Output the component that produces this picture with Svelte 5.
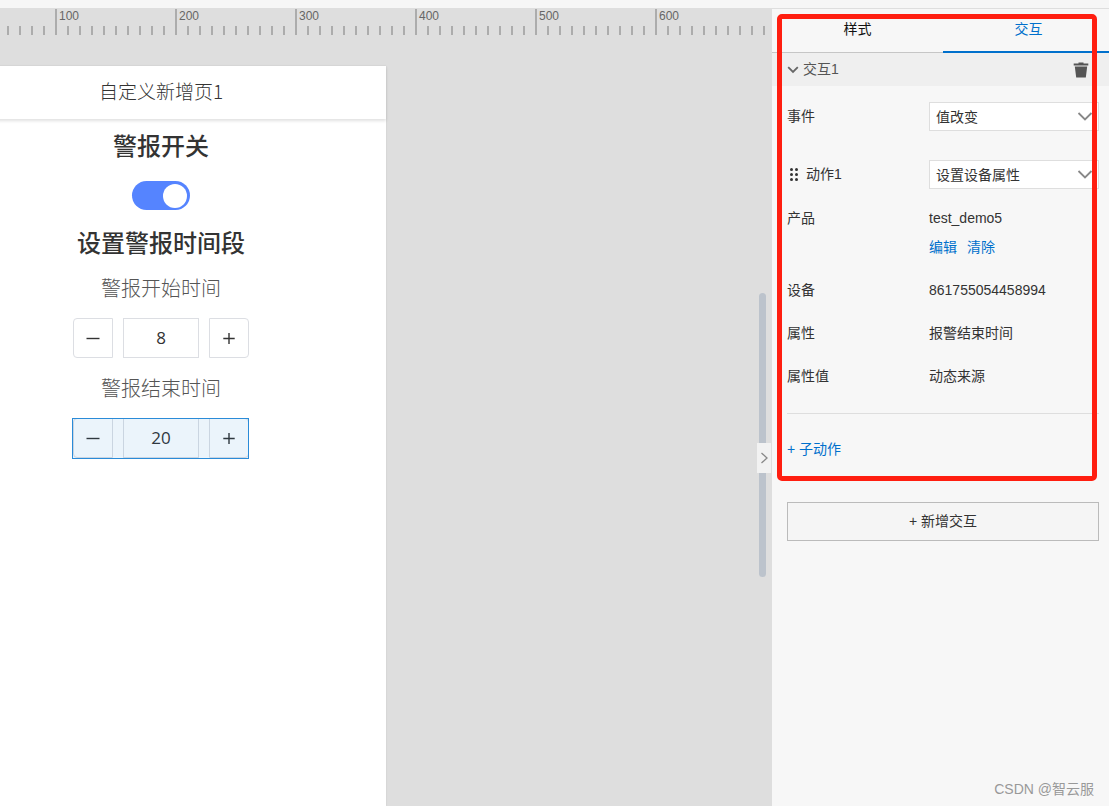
<script>
	const marks = [100, 200, 300, 400, 500, 600];

	let alarmOn = $state(true);
	let start = $state(8);
	let end = $state(20);
	let eventType = $state('值改变');
	let action = $state('设置设备属性');

	const details = [
		{ label: '设备', value: '861755054458994' },
		{ label: '属性', value: '报警结束时间' },
		{ label: '属性值', value: '动态来源' }
	];
</script>

{#snippet sign(plus)}
	<svg width="14" height="14" viewBox="0 0 14 14" stroke="#333" stroke-width="1.4" aria-hidden="true">
		<path d={plus ? 'M1.3 7.5H12.7M7 2V13' : 'M0.5 7.5H13.5'} />
	</svg>
{/snippet}

{#snippet arrow()}
	<svg class="arrow" width="16" height="10" viewBox="0 0 16 10" fill="none" stroke="#888" stroke-width="1.8" aria-hidden="true">
		<path d="M1.5 1L8 7.5L14.5 1" />
	</svg>
{/snippet}

<div class="editor">
	<div class="topbar"></div>
	<div class="workspace">
		<main class="canvas">
			<div class="ruler">
				{#each marks as mark}
					<span>{mark}</span>
				{/each}
			</div>

			<section class="page">
				<header>自定义新增页1</header>
				<div class="widgets">
					<h2><label for="alarm">警报开关</label></h2>
					<input id="alarm" class="switch" type="checkbox" bind:checked={alarmOn} />
					<h2>设置警报时间段</h2>

					<label class="caption" for="start">警报开始时间</label>
					<div class="stepper">
						<button aria-label="减少" onclick={() => start--}>{@render sign(false)}</button>
						<input id="start" type="text" bind:value={start} />
						<button aria-label="增加" onclick={() => start++}>{@render sign(true)}</button>
					</div>

					<label class="caption" for="end">警报结束时间</label>
					<div class="stepper selected">
						<button aria-label="减少" onclick={() => end--}>{@render sign(false)}</button>
						<input id="end" type="text" bind:value={end} />
						<button aria-label="增加" onclick={() => end++}>{@render sign(true)}</button>
					</div>
				</div>
			</section>

			<div class="scrollbar"></div>
			<button class="collapse" aria-label="收起">
				<svg width="8" height="12" viewBox="0 0 8 12" fill="none" stroke="#888" stroke-width="1.3">
					<path d="M1.5 1L7 6L1.5 11" />
				</svg>
			</button>
		</main>

		<aside class="panel">
			<nav class="tabs">
				<button>样式</button>
				<button class="active">交互</button>
			</nav>

			<div class="group">
				<svg width="12" height="8" viewBox="0 0 12 8" fill="none" stroke="#666" stroke-width="1.8" aria-hidden="true">
					<path d="M1.2 1.2L6 6L10.8 1.2" />
				</svg>
				<span>交互1</span>
				<button class="trash" aria-label="删除">
					<svg width="16" height="16" viewBox="0 0 16 16" fill="#555">
						<path d="M5.5 0.5H10.5V1.5H15.3V3.6H0.7V1.5H5.5Z" />
						<path d="M1.8 4.4H14.2L12.8 15.5H3.2Z" />
					</svg>
				</button>
			</div>

			<div class="form">
				<div class="row event">
					<label for="event">事件</label>
					<div class="select">
						<select id="event" bind:value={eventType}>
							<option>值改变</option>
						</select>
						{@render arrow()}
					</div>
				</div>

				<div class="row action">
					<label for="action">
						<svg width="8" height="14" viewBox="0 0 8 14" fill="#333" aria-hidden="true">
							{#each [1.5, 6.5, 11.5] as y}
								<circle cx="1.5" cy={y} r="1.5" />
								<circle cx="6.5" cy={y} r="1.5" />
							{/each}
						</svg>
						动作1
					</label>
					<div class="select">
						<select id="action" bind:value={action}>
							<option>设置设备属性</option>
						</select>
						{@render arrow()}
					</div>
				</div>

				<div class="row">
					<span>产品</span>
					<div>
						<div>test_demo5</div>
						<div class="links">
							<a href="#edit">编辑</a>
							<a href="#clear">清除</a>
						</div>
					</div>
				</div>

				{#each details as item}
					<div class="row">
						<span>{item.label}</span>
						<span>{item.value}</span>
					</div>
				{/each}

				<hr />
				<button class="sub">+ 子动作</button>
				<button class="add">+ 新增交互</button>
			</div>

			<div class="frame"></div>
			<div class="watermark">CSDN @智云服</div>
		</aside>
	</div>
</div>

<style>
	:global(body) {
		margin: 0;
		overflow: hidden;
	}

	.editor {
		display: flex;
		flex-direction: column;
		height: 100vh;
		font-family: 'Liberation Sans', 'Noto Sans CJK SC', sans-serif;
		font-size: 14px;
		color: #333;
		background: #f7f7f7;
	}

	.editor * {
		box-sizing: border-box;
	}

	button,
	input,
	select {
		margin: 0;
		padding: 0;
		font: inherit;
		color: inherit;
		background: none;
		border: 0;
	}

	svg {
		display: block;
		flex: none;
	}

	.topbar {
		flex: 0 0 8px;
		background: #f6f6f6;
	}

	.workspace {
		display: flex;
		flex: 1;
		min-height: 0;
	}

	/* canvas */
	.canvas {
		position: relative;
		display: flex;
		flex-direction: column;
		flex: 1;
		min-width: 0;
		overflow: hidden;
		background: #dedede;
	}

	.ruler {
		display: flex;
		flex: none;
		height: 26px;
		margin: 1px 6px 31px 0;
		padding-left: 55px;
		overflow: hidden;
		background: repeating-linear-gradient(90deg, transparent 0 7px, #acacac 7px 9px, transparent 9px 12px) 0 100% / 100% 9px no-repeat;
	}

	.ruler span {
		flex: 0 0 120px;
		padding-left: 2px;
		border-left: 2px solid #acacac;
		font-size: 12px;
		line-height: 14px;
		color: #666;
	}

	.page {
		flex: 1;
		width: 450px;
		margin-left: -64px;
		background: #fff;
		box-shadow: 0 0 2px rgba(0, 0, 0, 0.1);
	}

	.page header {
		height: 53px;
		font-size: 19px;
		font-weight: 300;
		font-family: 'Noto Sans CJK SC', sans-serif;
		line-height: 50px;
		text-align: center;
		box-shadow: 0 2px 3px rgba(0, 0, 0, 0.12);
	}

	.widgets {
		display: flex;
		flex-direction: column;
		align-items: center;
		padding-top: 3px;
		font-family: 'Open Sans', 'Noto Sans CJK SC', sans-serif;
	}

	h2 {
		margin: 0;
		font-size: 24px;
		font-weight: 500;
		line-height: 48px;
	}

	.switch {
		appearance: none;
		display: flex;
		width: 58px;
		height: 29px;
		margin: 11px 0 9px;
		padding: 3px;
		border-radius: 15px;
		background: #ccc;
	}

	.switch::before {
		content: '';
		width: 24px;
		height: 24px;
		border-radius: 50%;
		background: #fff;
	}

	.switch:checked {
		justify-content: flex-end;
		background: #5584ff;
	}

	.caption {
		margin: 2px 0 9px;
		font-size: 20px;
		font-weight: 300;
		line-height: 40px;
		color: #555;
	}

	.stepper + .caption {
		margin-top: 11px;
	}

	.stepper {
		position: relative;
		display: flex;
		gap: 10px;
		font-size: 17px;
	}

	.stepper button {
		display: flex;
		align-items: center;
		justify-content: center;
		width: 40px;
		height: 40px;
		border: 1px solid #dcdee3;
	}

	.stepper button:first-child {
		border-radius: 4px 0 0 4px;
	}

	.stepper button:last-child {
		border-radius: 0 4px 4px 0;
	}

	.stepper input {
		width: 76px;
		height: 40px;
		padding-bottom: 2px;
		border: 1px solid #dcdee3;
		text-align: center;
	}

	.selected::after {
		content: '';
		position: absolute;
		inset: 0 0 -1px -1px;
		border: 1px solid #2a8bd8;
		background: rgba(0, 112, 204, 0.08);
		pointer-events: none;
	}

	.scrollbar {
		position: absolute;
		top: 285px;
		right: 6px;
		width: 7px;
		height: 284px;
		border-radius: 4px;
		background: #bcc3cc;
	}

	.collapse {
		position: absolute;
		top: 435px;
		right: 1px;
		display: flex;
		align-items: center;
		justify-content: center;
		width: 14px;
		height: 30px;
		background: #f2f2f2;
	}

	/* settings panel */
	.panel {
		position: relative;
		flex: 0 0 337px;
		overflow: hidden;
		border-top: 1px solid #dedede;
		background: #f7f7f7;
	}

	.tabs {
		display: flex;
		margin-right: -5px;
	}

	.tabs button {
		flex: 1;
		height: 44px;
		padding-bottom: 6px;
		border-bottom: 1px solid #c6c6c6;
		color: #111;
	}

	.tabs .active {
		padding-bottom: 5px;
		border-bottom: 2px solid #0070cc;
		color: #0070cc;
	}

	.group {
		display: flex;
		align-items: center;
		gap: 4px;
		height: 33px;
		padding: 0 20px 0 15px;
		background: #efefef;
		color: #555;
	}

	.group span {
		padding-bottom: 3px;
	}

	.trash {
		margin-left: auto;
	}

	.form {
		padding: 16px 10px 0 15px;
	}

	.row {
		display: grid;
		grid-template-columns: 142px 1fr;
		margin-bottom: 14px;
		line-height: 29px;
	}

	.row label {
		display: flex;
		align-items: center;
	}

	.event {
		margin-bottom: 29px;
	}

	.action {
		margin-bottom: 15px;
	}

	.action label svg {
		margin: 0 8px 0 3px;
	}

	.select {
		position: relative;
	}

	.select select {
		appearance: none;
		display: block;
		width: 100%;
		height: 29px;
		padding: 0 24px 1px 6px;
		border: 1px solid #dedede;
		background: #fff;
	}

	.arrow {
		position: absolute;
		top: 10px;
		right: 6px;
		pointer-events: none;
	}

	.links {
		display: flex;
		gap: 10px;
	}

	a {
		color: #0070cc;
		text-decoration: none;
	}

	hr {
		margin: 22px 0 21px;
		border: 0;
		border-top: 1px solid #dedede;
	}

	.sub {
		display: block;
		height: 29px;
		padding-bottom: 3px;
		color: #0070cc;
	}

	.add {
		display: block;
		width: 100%;
		height: 39px;
		margin-top: 38px;
		padding-bottom: 3px;
		border: 1px solid #bbb;
		background: #f5f5f5;
	}

	/* highlighted area */
	.frame {
		position: absolute;
		top: 5px;
		left: 5px;
		right: 12px;
		height: 467px;
		border: 5px solid #ff1e10;
		border-radius: 5px;
		pointer-events: none;
	}

	.watermark {
		position: absolute;
		right: 15px;
		bottom: 7px;
		line-height: 20px;
		color: #999;
	}
</style>
